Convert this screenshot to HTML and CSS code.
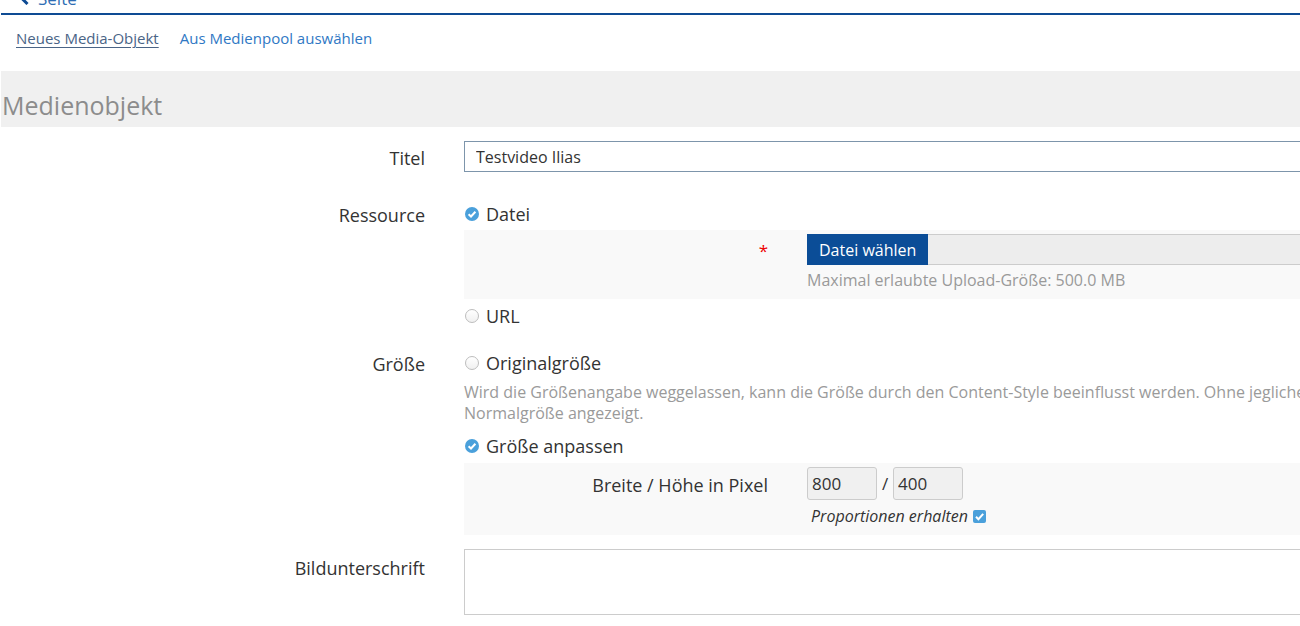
FILE: index.html
```html
<!DOCTYPE html>
<html lang="de">
<head>
<meta charset="utf-8">
<title>Medienobjekt</title>
<link rel="stylesheet" href="styles.css">
</head>
<body>
<div class="page">
  <div class="backbar">
    <a class="back" href="#"><svg class="chev" width="10" height="12" viewBox="0 0 10 12"><path d="M7.5 1 L2.5 6 L7.5 11" fill="none" stroke="#0e4b94" stroke-width="3"/></svg>Seite</a>
  </div>
  <div class="tabs">
    <a class="tab active" href="#">Neues Media-Objekt</a>
    <a class="tab" href="#">Aus Medienpool auswählen</a>
  </div>
  <div class="band"><h1 class="heading">Medienobjekt</h1></div>

  <div class="row row-title">
    <label class="lbl">Titel</label>
    <div class="field"><input class="text" type="text" value="Testvideo Ilias"></div>
  </div>

  <div class="row row-res">
    <div class="lbl">Ressource</div>
    <div class="field">
      <div class="opt"><span class="radio on"><svg width="14" height="14" viewBox="0 0 14 14"><circle cx="7" cy="7" r="7" fill="#4aa0db"/><path d="M3.6 7.2 L6 9.5 L10.4 4.8" fill="none" stroke="#fff" stroke-width="2"/></svg></span>Datei</div>
      <div class="sub sub-file">
        <div class="sublbl"><span class="req">*</span></div>
        <div class="subfield">
          <div class="upload"><span class="btn">Datei wählen</span><span class="filebox"></span></div>
          <div class="info">Maximal erlaubte Upload-Größe: 500.0 MB</div>
        </div>
      </div>
      <div class="opt opt-url"><span class="radio off"></span>URL</div>
    </div>
  </div>

  <div class="row row-size">
    <div class="lbl">Größe</div>
    <div class="field">
      <div class="opt"><span class="radio off"></span>Originalgröße</div>
      <div class="help">Wird die Größenangabe weggelassen, kann die Größe durch den Content-Style beeinflusst werden. Ohne jegliche Angabe wird das Objekt in seiner<br>Normalgröße angezeigt.</div>
      <div class="opt opt-fit"><span class="radio on"><svg width="14" height="14" viewBox="0 0 14 14"><circle cx="7" cy="7" r="7" fill="#4aa0db"/><path d="M3.6 7.2 L6 9.5 L10.4 4.8" fill="none" stroke="#fff" stroke-width="2"/></svg></span>Größe anpassen</div>
      <div class="sub sub-dim">
        <div class="sublbl dimlbl">Breite / Höhe in Pixel</div>
        <div class="subfield">
          <div class="dims"><input class="num" type="text" value="800"><span class="slash">/</span><input class="num" type="text" value="400"></div>
          <div class="prop">Proportionen erhalten <span class="cbox"><svg width="13" height="13" viewBox="0 0 13 13"><rect x="0" y="0" width="13" height="13" rx="2" fill="#4aa0db"/><path d="M3 6.8 L5.4 9.2 L10.2 3.8" fill="none" stroke="#fff" stroke-width="2"/></svg></span></div>
        </div>
      </div>
    </div>
  </div>

  <div class="row row-cap">
    <div class="lbl">Bildunterschrift</div>
    <div class="field"><textarea class="area"></textarea></div>
  </div>
</div>
</body>
</html>
```
FILE: styles.css
```css
html, body { margin: 0; padding: 0; overflow: hidden; background: #fff; }
body { font-family: "Open Sans", "Noto Sans", sans-serif; color: #333; }
.page { width: 1700px; margin-left: 1px; }

.backbar { height: 13px; border-bottom: 2px solid #0e4b94; position: relative; overflow: hidden; }
.back { display: flex; align-items: center; gap: 8px; margin-top: -12px; margin-left: 19px; color: #2e6db4; text-decoration: none; font-size: 17px; line-height: 22px; }
.chev { display: block; }

.tabs { display: flex; gap: 21px; padding: 12px 0 0 15px; height: 44px; }
.tab { font-size: 15px; line-height: 22px; color: #2f78c4; text-decoration: none; }
.tab.active { color: #4a6486; text-decoration: underline; text-underline-offset: 3px; }

.band { background: #f0f0f0; height: 56px; }
.heading { margin: 0; padding: 19px 0 0 1px; font-size: 25px; font-weight: 400; line-height: 30px; color: #8c8c8c; }

.row { display: grid; grid-template-columns: 424px 1fr; column-gap: 39px; }
.lbl { text-align: right; font-size: 18px; line-height: 24px; color: #333; }
.field { min-width: 0; }

.row-title { margin-top: 14px; }
.row-title .lbl { padding-top: 5px; }
.text { box-sizing: border-box; display: block; width: 100%; height: 31px; border: 1px solid #7d95ab; padding: 0 11px; font-family: inherit; font-size: 16px; color: #333; background: #fff; outline: none; }

.row-res { margin-top: 30px; }
.row-res .lbl { padding-top: 1px; }
.opt { display: flex; align-items: center; gap: 7px; height: 24px; padding-left: 1px; font-size: 18px; color: #333; }
.radio { display: block; width: 14px; height: 14px; flex: none; }
.radio svg { display: block; }
.radio.off { box-sizing: border-box; border: 1px solid #bdbdbd; border-radius: 50%; background: linear-gradient(#fff, #f0f0f0); }

.sub { display: grid; grid-template-columns: 304px 1fr; column-gap: 39px; background: #f9f9f9; }
.sublbl { text-align: right; font-size: 18px; line-height: 24px; color: #333; }
.sub-file { margin-top: 4px; padding: 4px 0 8px; }
.sub-file .sublbl { padding-top: 4px; }
.req { color: #e00; font-size: 17px; }
.upload { display: flex; height: 31px; }
.btn { display: flex; align-items: center; padding: 0 12px; background: #0b4d97; color: #fff; font-size: 16px; }
.filebox { flex: 1; box-sizing: border-box; background: #ededed; border: 1px solid #cccccc; border-left: 0; }
.info { font-size: 16px; line-height: 22px; color: #9a9a9a; margin-top: 4px; }

.opt-url { margin-top: 5px; }

.row-size { margin-top: 23px; }
.row-size .lbl { padding-top: 1px; }
.help { margin-top: 7px; font-size: 16px; line-height: 21px; color: #9a9a9a; white-space: nowrap; }
.opt-fit { margin-top: 10px; }
.sub-dim { margin-top: 5px; padding: 4px 0 8px; }
.dimlbl { padding-top: 6px; }
.dims { display: flex; align-items: center; height: 33px; }
.num { box-sizing: border-box; width: 70px; height: 33px; border: 1px solid #cccccc; border-radius: 3px; background: #f0f0f0; padding: 0 4px; font-family: inherit; font-size: 17px; color: #333; outline: none; }
.slash { width: 16px; text-align: center; font-size: 17px; }
.prop { margin-top: 5px; padding-left: 4px; display: flex; align-items: center; gap: 5px; font-size: 16px; line-height: 22px; font-style: italic; color: #333; }
.cbox svg { display: block; }

.row-cap { margin-top: 14px; }
.row-cap .lbl { padding-top: 7px; }
.area { box-sizing: border-box; display: block; width: 100%; height: 66px; border: 1px solid #cccccc; resize: none; outline: none; font-family: inherit; }
```
